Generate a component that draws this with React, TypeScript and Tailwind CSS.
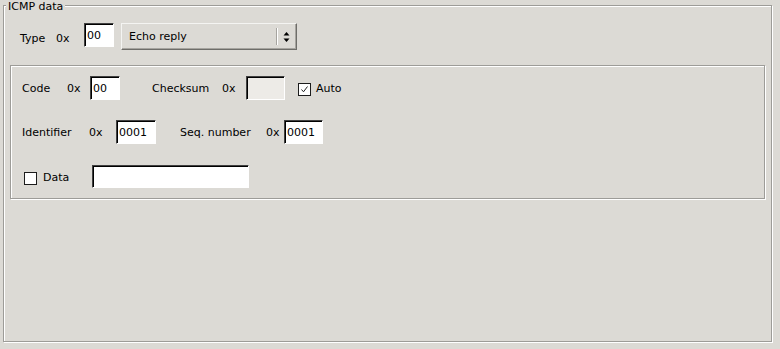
import React from "react";

const font = { fontFamily: '"DejaVu Sans", "Liberation Sans", sans-serif' };

function TextBox({ w, h = 23, value = "", disabled = false }: { w: number; h?: number; value?: string; disabled?: boolean }) {
  return (
    <div
      className={`border border-t-[#404040] border-l-[#404040] border-b-white border-r-white shadow-[inset_1px_1px_0_#000] pl-[2px] pt-[2px] text-[11px] text-black flex items-center ${disabled ? "bg-[#edebe7]" : "bg-white"}`}
      style={{ width: w, height: h }}
    >
      {value}
    </div>
  );
}

function CheckBox({ checked }: { checked: boolean }) {
  return (
    <div className="w-[13px] h-[13px] border border-[#1c1c1c] bg-white flex items-center justify-center">
      {checked && (
        <svg width="9" height="9" viewBox="0 0 9 9">
          <path d="M1.5 4.5 L3.5 6.8 L7.5 1.5" stroke="#222" strokeWidth="1" fill="none" />
        </svg>
      )}
    </div>
  );
}

export default function App() {
  return (
    <div className="w-[780px] h-[349px] bg-[#dcdad5] text-black text-[11px] pt-[5px] pl-[3px]" style={font}>
      <div className="relative w-[769px] h-[337px] border border-[#9d9c98] shadow-[1px_1px_0_#fff,inset_1px_1px_0_#fff]">
        <span className="absolute left-[2px] top-[-6px] px-[2px] bg-[#dcdad5] leading-[14px]">ICMP data</span>

        <div className="flex items-start pl-[16px] pt-[17px]">
          <span className="w-[36px] h-[27px] pt-[2px] leading-[27px]">Type</span>
          <span className="w-[28px] h-[27px] pt-[2px] leading-[27px]">0x</span>
          <TextBox w={30} h={24} value="00" />
          <div className="ml-[7px] w-[176px] h-[27px] flex items-center border border-t-[#f4f4f2] border-l-[#f4f4f2] border-b-[#6e6d69] border-r-[#6e6d69] shadow-[inset_-1px_-1px_0_#a6a49f]">
            <span className="flex-1 pl-[7px] pt-[2px]">Echo reply</span>
            <div className="w-[1px] h-[17px] bg-[#a6a49f] shadow-[1px_0_0_#fff]" />
            <div className="w-[19px] flex justify-center">
              <svg width="7" height="12" viewBox="0 0 7 12">
                <path d="M3.5 1 L6.5 4.5 L0.5 4.5 Z" fill="#000" />
                <path d="M3.5 11 L6.5 7.5 L0.5 7.5 Z" fill="#000" />
              </svg>
            </div>
          </div>
        </div>

        <div className="ml-[6px] mt-[15px] w-[755px] h-[134px] border border-[#9d9c98] shadow-[1px_1px_0_#fff,inset_1px_1px_0_#fff] pl-[11px] pt-[10px]">
          <div className="flex items-center h-[24px]">
            <span className="w-[45px] pt-[3px]">Code</span>
            <span className="w-[23px] pt-[3px]">0x</span>
            <TextBox w={30} h={24} value="00" />
            <span className="ml-[32px] w-[70px] pt-[3px]">Checksum</span>
            <span className="w-[24px] pt-[3px]">0x</span>
            <TextBox w={39} h={24} disabled />
            <div className="ml-[13px] mt-[3px]"><CheckBox checked /></div>
            <span className="ml-[5px] pt-[3px]">Auto</span>
          </div>

          <div className="flex items-center h-[24px] mt-[20px]">
            <span className="w-[67px] pt-[3px]">Identifier</span>
            <span className="w-[27px] pt-[3px]">0x</span>
            <TextBox w={40} h={24} value="0001" />
            <span className="ml-[24px] w-[86px] pt-[3px]">Seq. number</span>
            <span className="w-[18px] pt-[3px]">0x</span>
            <TextBox w={39} h={24} value="0001" />
          </div>

          <div className="flex items-center h-[23px] mt-[21px] pl-[2px]">
            <div className="mt-[3px]"><CheckBox checked={false} /></div>
            <span className="ml-[6px] w-[49px] pt-[3px]">Data</span>
            <TextBox w={157} />
          </div>
        </div>
      </div>
    </div>
  );
}
